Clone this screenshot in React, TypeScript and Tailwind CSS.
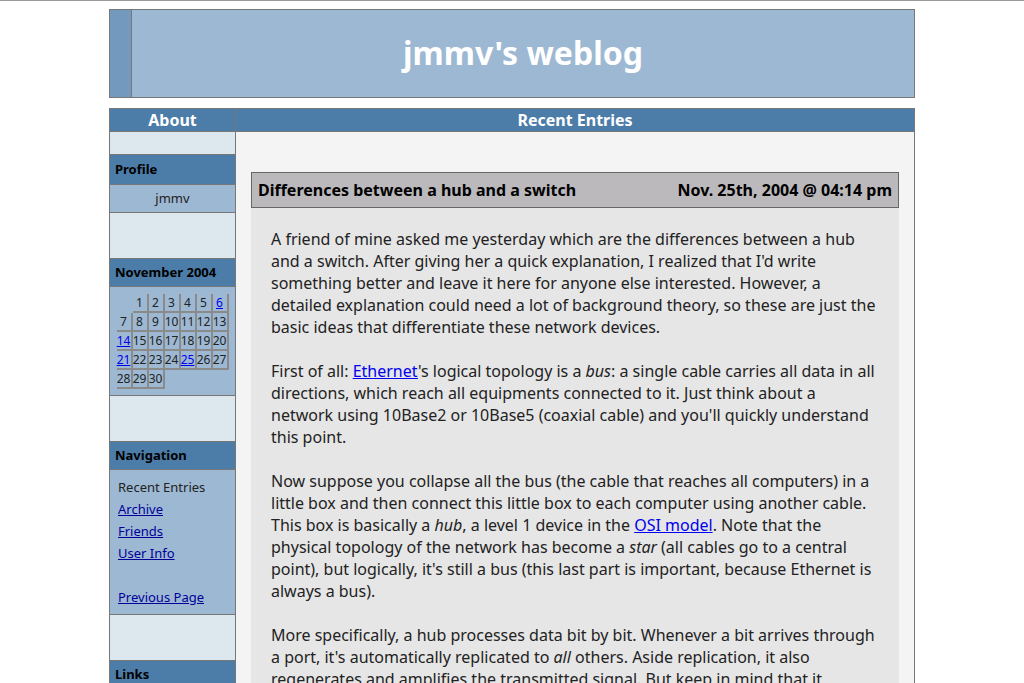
import React from "react"

const cal: (number | null)[][] = [
    [null, 1, 2, 3, 4, 5, 6],
    [7, 8, 9, 10, 11, 12, 13],
    [14, 15, 16, 17, 18, 19, 20],
    [21, 22, 23, 24, 25, 26, 27],
    [28, 29, 30],
]
const linked = [6, 14, 21, 25]

function SideHeader({ title, h }: { title: string; h: string }) {
    return (
        <div className={`${h} flex items-center border-b border-[#777] bg-[#4c7ca8] pl-[5px] text-[13px] font-bold text-black`}>
            {title}
        </div>
    )
}

function Spacer({ h }: { h: string }) {
    return <div className={`${h} border-b border-[#777] bg-[#dde7ee]`} />
}

export default function App() {
    return (
        <div className="min-h-[683px] border-t border-[#999] bg-white pt-2 font-['Noto_Sans',sans-serif] text-[#222]">
            <div className="mx-auto flex h-[89px] w-[806px] border border-[#777] bg-[#9db8d3]">
                <div className="w-[22px] border-r border-[#777] bg-[#7399bf]" />
                <h1 className="flex flex-1 items-center justify-center pb-[2px] text-[32px] font-bold text-white">jmmv's weblog</h1>
            </div>

            <div className="mx-auto mt-[10px] w-[806px] border border-[#777]">
                <div className="flex h-[23px] border-b border-[#777] bg-[#4c7ca8] text-[16px] font-bold leading-[22px] text-white">
                    <div className="w-[126px] border-r border-[#777] text-center">About</div>
                    <div className="flex-1 text-center">Recent Entries</div>
                </div>

                <div className="flex">
                    <div className="w-[126px] shrink-0 border-r border-[#777] text-[13px]">
                        <Spacer h="h-[23px]" />
                        <SideHeader title="Profile" h="h-[30px]" />
                        <div className="flex h-[28px] items-center justify-center border-b border-[#777] bg-[#9db8d3]">jmmv</div>
                        <Spacer h="h-[46px]" />
                        <SideHeader title="November 2004" h="h-[28px]" />
                        <div className="flex h-[109px] justify-center border-b border-[#777] bg-[#9db8d3] pt-[7px]">
                            <div className="text-[12px] leading-[17px]">
                                {cal.map((row, i) => (
                                    <div key={i} className="flex">
                                        {row.map((d, j) => (
                                            <div
                                                key={j}
                                                className={d === null
                                                    ? "h-[19px] w-[16px]"
                                                    : "h-[19px] w-[16px] border-r-2 border-b-2 border-[#8a8a8a] text-center"}
                                            >
                                                {d !== null && (linked.includes(d)
                                                    ? <a href="#" className="text-[#0000ee] underline">{d}</a>
                                                    : d)}
                                            </div>
                                        ))}
                                    </div>
                                ))}
                            </div>
                        </div>
                        <Spacer h="h-[46px]" />
                        <SideHeader title="Navigation" h="h-[28px]" />
                        <div className="h-[145px] border-b border-[#777] bg-[#9db8d3] pl-[8px] pt-[6px] leading-[22px]">
                            <div>Recent Entries</div>
                            <div><a href="#" className="text-[#000099] underline">Archive</a></div>
                            <div><a href="#" className="text-[#000099] underline">Friends</a></div>
                            <div><a href="#" className="text-[#000099] underline">User Info</a></div>
                            <div className="h-[22px]" />
                            <div><a href="#" className="text-[#000099] underline">Previous Page</a></div>
                        </div>
                        <Spacer h="h-[46px]" />
                        <SideHeader title="Links" h="h-[29px]" />
                        <div className="h-[120px] bg-[#9db8d3]" />
                    </div>

                    <div className="flex-1 bg-[#f4f4f4] px-[15px] pt-[40px] pb-[20px]">
                        <div className="flex h-[36px] items-center justify-between border border-[#666] bg-[#bbb9bc] px-[6px] text-[16px] font-bold text-black">
                            <span>Differences between a hub and a switch</span>
                            <span>Nov. 25th, 2004 @ 04:14 pm</span>
                        </div>
                        <div className="flex flex-col gap-[22px] bg-[#e6e6e6] px-[20px] pt-[20px] pb-[22px] text-[16px] leading-[22px]">
                            <p>A friend of mine asked me yesterday which are the differences between a hub and a switch. After giving her a quick explanation, I realized that I'd write something better and leave it here for anyone else interested. However, a detailed explanation could need a lot of background theory, so these are just the basic ideas that differentiate these network devices.</p>
                            <p>First of all: <a href="#" className="text-[#0000ee] underline">Ethernet</a>'s logical topology is a <i>bus</i>: a single cable carries all data in all directions, which reach all equipments connected to it. Just think about a network using 10Base2 or 10Base5 (coaxial cable) and you'll quickly understand this point.</p>
                            <p>Now suppose you collapse all the bus (the cable that reaches all computers) in a little box and then connect this little box to each computer using another cable. This box is basically a <i>hub</i>, a level 1 device in the <a href="#" className="text-[#0000ee] underline">OSI model</a>. Note that the physical topology of the network has become a <i>star</i> (all cables go to a central point), but logically, it's still a bus (this last part is important, because Ethernet is always a bus).</p>
                            <p>More specifically, a hub processes data bit by bit. Whenever a bit arrives through a port, it's automatically replicated to <i>all</i> others. Aside replication, it also regenerates and amplifies the transmitted signal. But keep in mind that it doesn't understand anything about the data it carries: it just repeats bits.</p>
                        </div>
                    </div>
                </div>
            </div>
        </div>
    )
}
